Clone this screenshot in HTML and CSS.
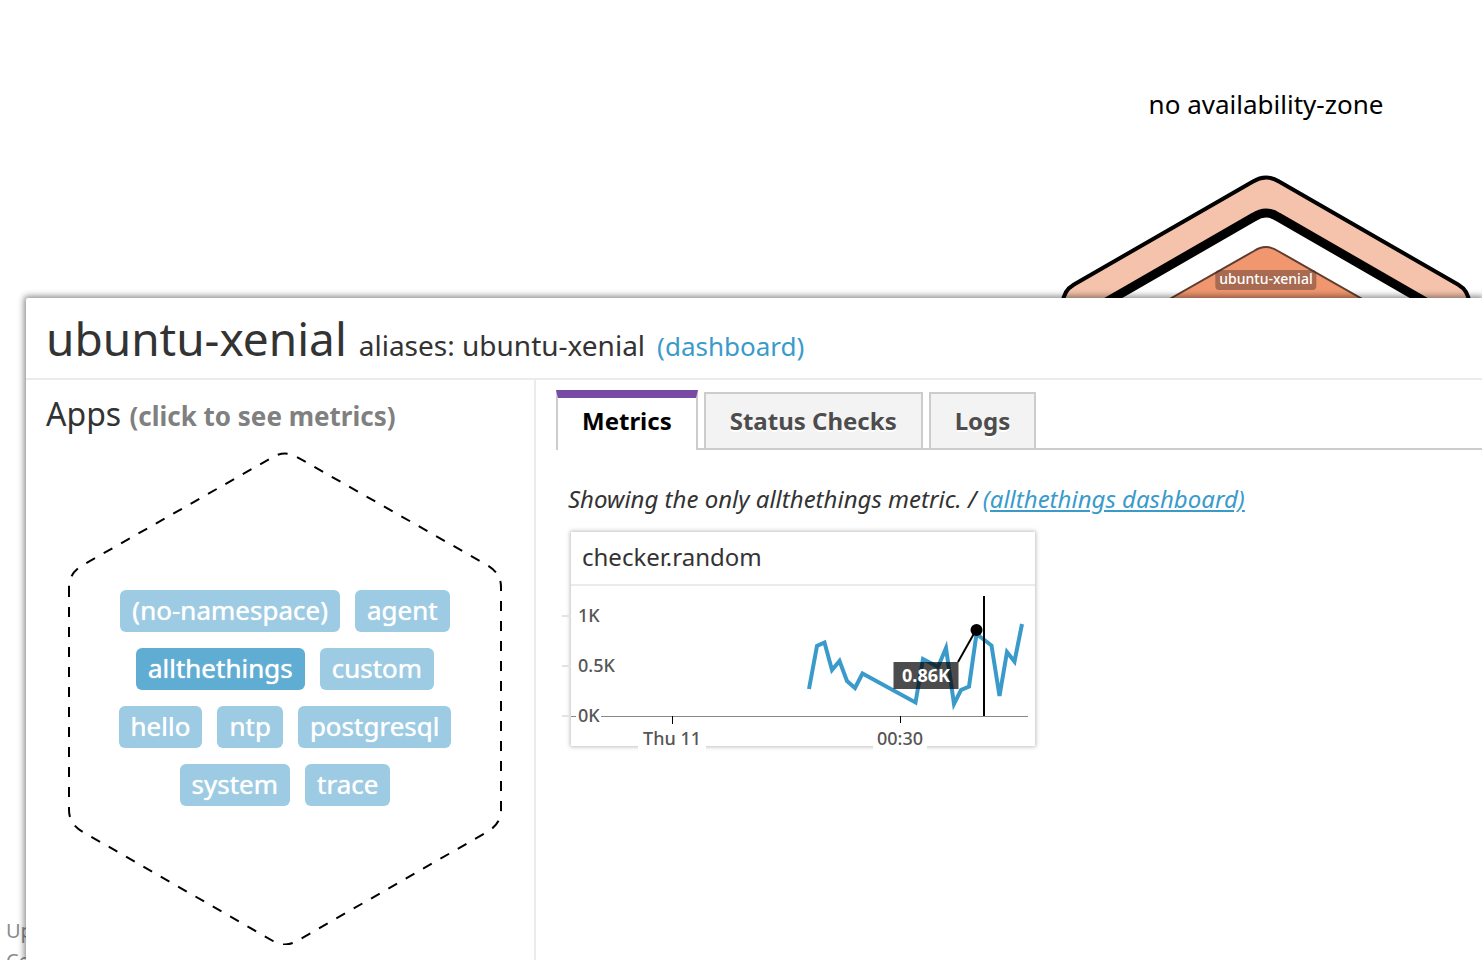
FILE: index.html
```html
<!DOCTYPE html>
<html lang="en">
<head>
<meta charset="utf-8">
<title>ubuntu-xenial</title>
<meta name="viewport" content="width=device-width, initial-scale=1">
<link rel="stylesheet" href="styles.css">
</head>
<body>
<main class="map">
  <section class="zone">
    <h2 class="zone-title">no availability-zone</h2>
    <div class="zone-host">
      <svg class="zone-hex" width="432" height="400" viewBox="1050 160 432 400" aria-hidden="true">
        <path class="hex-ring" d="M1253 181.500Q1266 173.500 1279 181.500L1458 284.500Q1469 291 1469 303V460H1063V303Q1063 291 1074 284.500Z"/>
        <path class="hex-core" d="M1254 217Q1266 209 1278 217L1438 309V440H1094V309Z"/>
        <path class="hex-node" d="M1254 251Q1266 243 1278 251L1386 312.500V400H1146V312.500Z"/>
      </svg>
      <span class="host-label">ubuntu-xenial</span>
    </div>
  </section>
  <div class="status"><p>Up</p><p>Co</p></div>
</main>

<section class="panel">
  <header class="panel-head">
    <h1 class="host-name">ubuntu-xenial</h1>
    <span class="aliases">aliases: ubuntu-xenial</span>
    <a class="dash-link" href="#">(dashboard)</a>
  </header>
  <div class="panel-body">
    <section class="apps">
      <h2 class="apps-title">Apps <strong class="hint">(click to see metrics)</strong></h2>
      <div class="apps-hex">
        <svg class="apps-outline" viewBox="0 0 434 494" aria-hidden="true">
          <path d="M1 136V359Q1 373 15 381L205 490Q217 497 229 490L419 381Q433 373 433 359V136Q433 122 419 114L229 6Q217 -1 205 6L15 114Q1 122 1 136Z"/>
        </svg>
        <div class="tags">
          <div class="tag-row"><button class="tag">(no-namespace)</button><button class="tag">agent</button></div>
          <div class="tag-row"><button class="tag tag-on">allthethings</button><button class="tag">custom</button></div>
          <div class="tag-row"><button class="tag">hello</button><button class="tag">ntp</button><button class="tag">postgresql</button></div>
          <div class="tag-row"><button class="tag">system</button><button class="tag">trace</button></div>
        </div>
      </div>
    </section>
    <section class="detail">
      <div class="tabs" role="tablist">
        <button class="tab tab-on" role="tab" aria-selected="true">Metrics</button>
        <button class="tab" role="tab" aria-selected="false">Status Checks</button>
        <button class="tab" role="tab" aria-selected="false">Logs</button>
      </div>
      <p class="summary">Showing the only allthethings metric. / <a href="#">(allthethings dashboard)</a></p>
      <article class="card">
        <h3 class="card-title">checker.random</h3>
        <svg class="chart" viewBox="571 586 464 160" role="img" aria-label="checker.random over time">
          <path class="grid" d="M562 616H571M562 666H571M562 716H571"/>
          <path class="axis" d="M571 716.500H576M601 716.500H1028"/>
          <path class="tick" d="M672.500 716V724M900.500 716V723"/>
          <rect class="halo" x="638" y="726" width="68" height="25"/>
          <rect class="halo" x="873" y="726" width="54" height="25"/>
          <text class="label" x="578" y="622">1K</text>
          <text class="label" x="578" y="672">0.5K</text>
          <text class="label" x="578" y="722">0K</text>
          <text class="label label-mid" x="672" y="745">Thu 11</text>
          <text class="label label-mid" x="900" y="745">00:30</text>
          <path class="series" d="M809 689L817 646L824.500 642.500L832 670L839.500 661L847 681L855 688L862.500 673.500L915.500 702.500L923 659L938 667L946 648L954 704L961 690L969 686.500L976.500 634L991.500 645.500L999.500 696L1007 652L1014.500 661.500L1022 624"/>
          <path class="cursor" d="M984 596V716"/>
          <path class="leader" d="M976 630L958 662"/>
          <circle cx="976.500" cy="630" r="6"/>
          <rect class="tip" x="893.500" y="662" width="65" height="27"/>
          <text class="tip-text" x="926" y="682">0.86K</text>
        </svg>
      </article>
    </section>
  </div>
</section>
</body>
</html>
```
FILE: styles.css
```css
* { box-sizing: border-box; }
body {
  margin: 0;
  min-height: 100vh;
  overflow: hidden;
  background: #fff;
  color: #333;
  font-family: "Noto Sans", "Open Sans", sans-serif;
}
h1, h2, h3, p { margin: 0; font-weight: 400; }
button { font: inherit; border: 0; cursor: pointer; }
a { color: #3a9bcb; }

.map { position: relative; height: 100vh; overflow: hidden; }
.zone {
  position: absolute;
  top: 85px;
  right: 0;
  width: 432px;
}
.zone-title {
  color: #000;
  font-size: 26px;
  line-height: 38px;
  text-align: center;
}
.zone-host { position: relative; margin-top: 37px; }
.zone-hex { display: block; }
.hex-ring { fill: #f5c3ab; stroke: #000; stroke-width: 4; }
.hex-core { fill: #fff; stroke: #000; stroke-width: 9; }
.hex-node { fill: #f0976f; stroke: #5f3c2e; stroke-width: 2; }
.host-label {
  position: absolute;
  top: 110px;
  left: 50%;
  transform: translateX(-50%);
  padding: 0 4px 2px;
  border-radius: 4px;
  background: rgba(60, 40, 35, .4);
  color: #fff;
  font-size: 14px;
  font-weight: 500;
  line-height: 18px;
}
.status {
  position: absolute;
  left: 6px;
  top: 916px;
  color: #8c8c8c;
  font-size: 20px;
  line-height: 30px;
}

.panel {
  position: absolute;
  inset: 298px 0 0 26px;
  display: flex;
  flex-direction: column;
  border-radius: 2px 0 0 0;
  background: #fff;
  box-shadow: 0 0 6px 2px rgba(0, 0, 0, .45);
}
.panel-head {
  display: flex;
  align-items: baseline;
  gap: 12px;
  padding: 7px 20px;
  border-bottom: 2px solid #ebebeb;
}
.host-name { font-size: 46px; line-height: 66px; }
.aliases { font-size: 28px; }
.dash-link { font-size: 26px; text-decoration: none; }
.panel-body { display: grid; grid-template-columns: 510px 1fr; flex: 1; min-height: 0; }

.apps { padding: 12px 20px; border-right: 2px solid #ebebeb; }
.apps-title { font-size: 32px; line-height: 44px; }
.hint { color: #808080; font-size: 26px; font-weight: 700; }
.apps-hex { display: grid; margin: 13px 12px 0 22px; }
.apps-outline, .tags { grid-area: 1 / 1; }
.apps-outline { width: 434px; height: 494px; }
.apps-outline path {
  fill: none;
  stroke: #000;
  stroke-width: 2;
  stroke-dasharray: 10 10;
}
.tags {
  display: flex;
  flex-direction: column;
  justify-content: center;
  width: 434px;
  gap: 16px;
}
.tag-row { display: flex; justify-content: center; gap: 15px; }
.tag {
  height: 42px;
  padding: 0 12px 2px;
  border-radius: 6px;
  background: #9ccbe3;
  color: #fff;
  font-size: 26px;
  line-height: 40px;
  text-shadow: 0 0 1px #fff;
}
.tag-on { background: #60add4; }

.detail { min-width: 0; padding: 10px 0 0 20px; }
.tabs {
  display: flex;
  align-items: flex-end;
  gap: 6px;
  height: 60px;
  box-shadow: inset 0 -2px #ccc;
}
.tab {
  height: 58px;
  padding: 0 24px 2px;
  border: 2px solid #ccc;
  background: #f3f3f3;
  color: #4d4d4d;
  font-size: 24px;
  font-weight: 700;
  text-shadow: 0 2px 0 #fff;
}
.tab-on {
  height: 60px;
  padding-bottom: 8px;
  border-top: 8px solid #774aa4;
  border-bottom: 0;
  background: #fff;
  color: #000;
}
.summary {
  margin: 31px 12px 15px;
  font-size: 24px;
  font-style: italic;
  line-height: 36px;
}
.card {
  width: 464px;
  margin-left: 15px;
  background: #fff;
  box-shadow: 0 0 4px 1px rgba(0, 0, 0, .25);
}
.card-title {
  padding: 7px 11px 9px;
  border-bottom: 2px solid #ebebeb;
  font-size: 24px;
  line-height: 36px;
}
.chart { display: block; width: 464px; height: 160px; overflow: visible; }
.grid { stroke: #e3e3e3; stroke-width: 2; }
.axis { stroke: #888; stroke-width: 1; }
.tick { stroke: #000; stroke-width: 1; }
.halo { fill: #fff; }
.label { fill: #555; font-size: 18px; font-weight: 500; }
.label-mid, .tip-text { text-anchor: middle; }
.series { fill: none; stroke: #3a9bcb; stroke-width: 4; }
.cursor, .leader { stroke: #000; stroke-width: 2; }
.tip { fill: rgba(0, 0, 0, .7); }
.tip-text { fill: #fff; font-size: 18px; font-weight: 700; }
```
